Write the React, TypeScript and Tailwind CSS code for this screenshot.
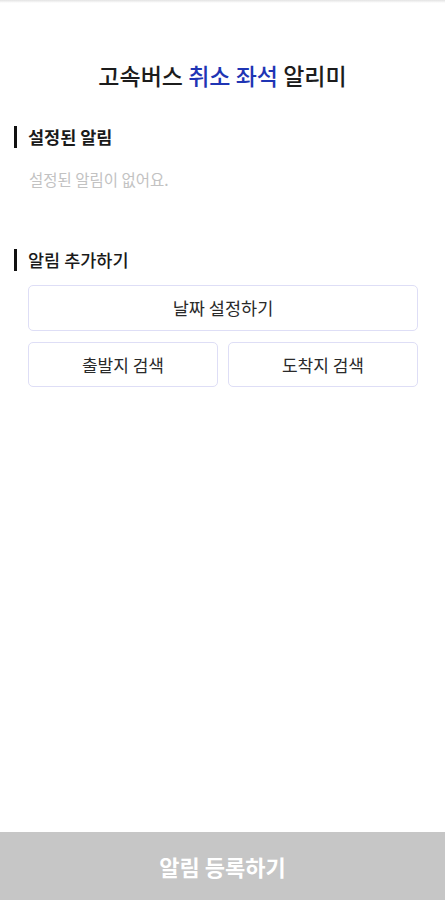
import React from 'react';

const font = { fontFamily: '"Noto Sans CJK KR", "Noto Sans", sans-serif' };

const SectionTitle = ({ children, bold }: { children: React.ReactNode; bold?: boolean }) => (
  <div className="flex items-center gap-[11px] pl-[14px]">
    <span className="w-[3px] h-[22px] bg-[#111]" />
    <h2 className={`text-[17.5px] leading-6 text-[#1a1a1a] ${bold ? 'font-semibold' : 'font-medium'}`}>{children}</h2>
  </div>
);

export default function App() {
  return (
    <div className="min-h-screen flex flex-col bg-white" style={font}>
      <div className="h-[3px] bg-linear-to-b from-[#e3e3e3] to-white" />

      <main className="flex-1 flex flex-col">
        <h1 className="mt-[57px] text-center text-[23px] leading-[30px] font-medium text-[#1c1c1c]">
          고속버스 <span className="text-[#1f35b4]">취소 좌석</span> 알리미
        </h1>

        {/* 설정된 알림 */}
        <section className="mt-[35px]">
          <SectionTitle bold>설정된 알림</SectionTitle>
          <p className="mt-[20px] pl-[29px] text-[15.5px] leading-5 text-[#c2c2c2]">설정된 알림이 없어요.</p>
        </section>

        {/* 알림 추가하기 */}
        <section className="mt-[59px]">
          <SectionTitle>알림 추가하기</SectionTitle>
          <div className="mt-[13px] pl-[28px] pr-[27px] flex flex-col gap-[11px]">
            <button className="h-[46px] rounded-[5px] border border-[#dedef6] text-[17.5px] text-[#2a2a2a]">
              날짜 설정하기
            </button>
            <div className="grid grid-cols-2 gap-[10px]">
              <button className="h-[45px] rounded-[5px] border border-[#dedef6] text-[17px] text-[#2a2a2a]">
                출발지 검색
              </button>
              <button className="h-[45px] rounded-[5px] border border-[#dedef6] text-[17px] text-[#2a2a2a]">
                도착지 검색
              </button>
            </div>
          </div>
        </section>
      </main>

      <button className="h-[68px] bg-[#c6c6c6] text-white text-[22px] font-bold">알림 등록하기</button>
    </div>
  );
}
